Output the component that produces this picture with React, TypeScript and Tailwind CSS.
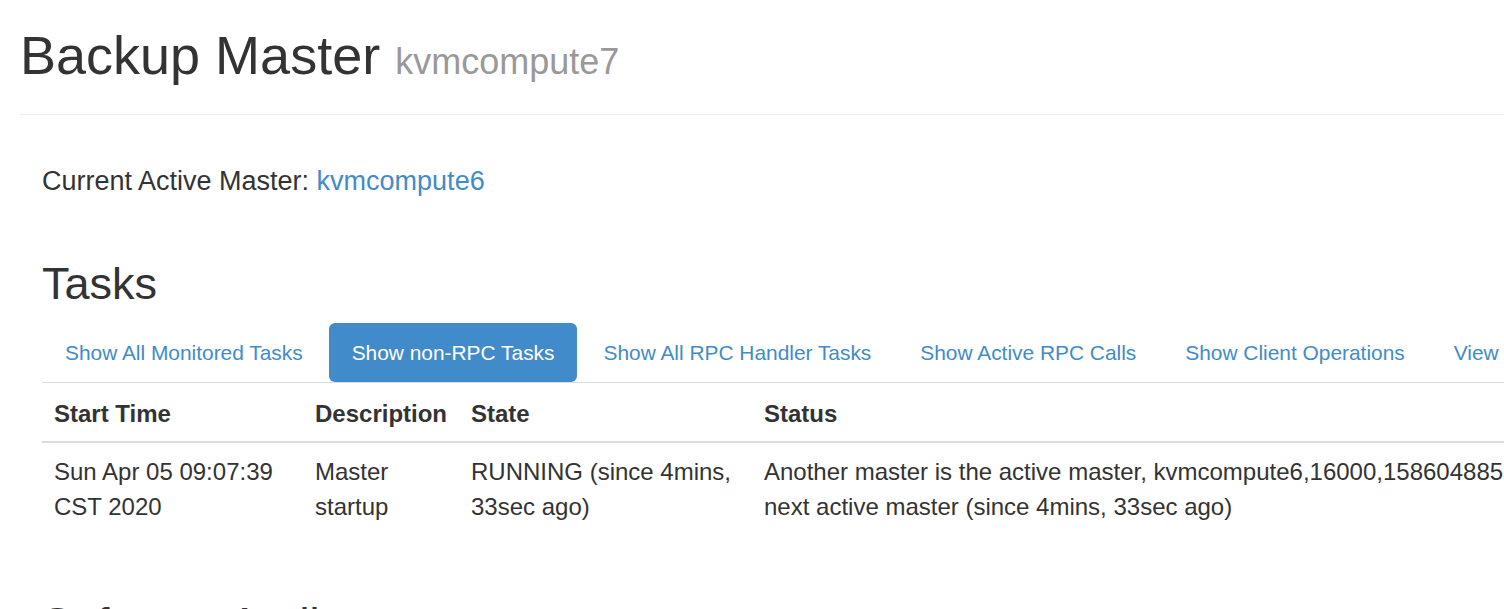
import React from 'react';

const tabs = [
  { label: 'Show All Monitored Tasks', active: false },
  { label: 'Show non-RPC Tasks', active: true },
  { label: 'Show All RPC Handler Tasks', active: false },
  { label: 'Show Active RPC Calls', active: false },
  { label: 'Show Client Operations', active: false },
  { label: 'View as JSON', active: false },
];

export default function App() {
  return (
    <div className="w-[1504px] h-[609px] overflow-hidden bg-white text-[#333] font-['Liberation_Sans',Arial,sans-serif]">
      <div className="w-[2100px] pl-[20px]">
        {/* Page header */}
        <div className="pt-[25px] pb-[22px] border-b border-[#eee]">
          <h1 className="text-[54px] leading-[60px] font-normal">
            Backup Master <small className="text-[36px] text-[#999]">kvmcompute7</small>
          </h1>
        </div>

        <div className="pl-[22px]">
          <h4 className="mt-[51px] text-[27px] leading-[30px] font-normal">
            Current Active Master: <a href="#" className="text-[#428bca]">kvmcompute6</a>
          </h4>

          <h2 className="mt-[63px] text-[45px] leading-[49px] font-normal">Tasks</h2>

          {/* Tabs */}
          <ul className="mt-[15px] flex border-b border-[#ddd] w-[1900px]">
            {tabs.map((t, i) => (
              <li key={t.label} className={i > 0 ? 'ml-[3px]' : ''}>
                <a
                  href="#"
                  className={`block px-[23px] py-[15px] text-[20.9px] leading-[29px] rounded-[6px] whitespace-nowrap ${
                    t.active ? 'bg-[#428bca] text-white' : 'text-[#428bca]'
                  }`}
                >
                  {t.label}
                </a>
              </li>
            ))}
          </ul>

          {/* Task table */}
          <table className="table-fixed w-[1900px] text-[24px] leading-[35px] text-left border-collapse">
            <colgroup>
              <col className="w-[261px]" />
              <col className="w-[156px]" />
              <col className="w-[293px]" />
              <col />
            </colgroup>
            <thead>
              <tr className="border-b-2 border-[#ddd]">
                <th className="px-[12px] pt-[13px] pb-[10px] font-bold whitespace-nowrap">Start Time</th>
                <th className="px-[12px] pt-[13px] pb-[10px] font-bold whitespace-nowrap">Description</th>
                <th className="px-[12px] pt-[13px] pb-[10px] font-bold whitespace-nowrap">State</th>
                <th className="px-[12px] pt-[13px] pb-[10px] font-bold whitespace-nowrap">Status</th>
              </tr>
            </thead>
            <tbody>
              <tr className="align-top">
                <td className="px-[12px] pt-[11px] pb-[12px]">Sun Apr 05 09:07:39 CST 2020</td>
                <td className="px-[12px] pt-[11px] pb-[12px]">Master startup</td>
                <td className="px-[12px] pt-[11px] pb-[12px]">RUNNING (since 4mins, 33sec ago)</td>
                <td className="px-[12px] pt-[11px] pb-[12px]">
                  Another master is the active master, kvmcompute6,16000,1586048853541; waiting to become the
                  <br />
                  next active master (since 4mins, 33sec ago)
                </td>
              </tr>
            </tbody>
          </table>

          <h2 className="mt-[63px] text-[45px] leading-[49px] font-normal">Software Attributes</h2>
        </div>
      </div>
    </div>
  );
}
